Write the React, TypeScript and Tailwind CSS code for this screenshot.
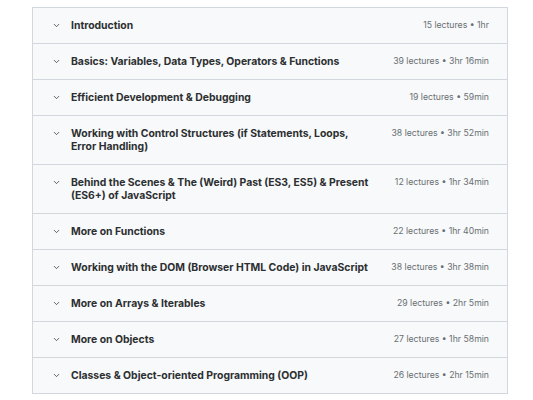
import { ChevronDown } from 'lucide-react';

const sections = [
  { title: 'Introduction', meta: '15 lectures • 1hr' },
  { title: 'Basics: Variables, Data Types, Operators & Functions', meta: '39 lectures • 3hr 16min' },
  { title: 'Efficient Development & Debugging', meta: '19 lectures • 59min' },
  { title: 'Working with Control Structures (if Statements, Loops, Error Handling)', meta: '38 lectures • 3hr 52min' },
  { title: 'Behind the Scenes & The (Weird) Past (ES3, ES5) & Present (ES6+) of JavaScript', meta: '12 lectures • 1hr 34min' },
  { title: 'More on Functions', meta: '22 lectures • 1hr 40min' },
  { title: 'Working with the DOM (Browser HTML Code) in JavaScript', meta: '38 lectures • 3hr 38min' },
  { title: 'More on Arrays & Iterables', meta: '29 lectures • 2hr 5min' },
  { title: 'More on Objects', meta: '27 lectures • 1hr 58min' },
  { title: 'Classes & Object-oriented Programming (OOP)', meta: '26 lectures • 2hr 15min' },
];

export default function App() {
  return (
    <div className="min-h-screen bg-white pt-[7px] font-['Inter',sans-serif]">
      <div className="mx-[32px] w-[476px] border border-[#d1d7dc] border-b-0">
        {sections.map((s) => (
          <div
            key={s.title}
            className="flex items-start bg-[#f7f9fa] border-b border-[#d1d7dc] pl-[19px] pr-[18px] py-[11px]"
          >
            <ChevronDown className="w-[9px] h-[9px] mt-[2px] text-[#2d2f31] shrink-0" strokeWidth={2} />
            <div className="flex-1 ml-[10px] text-[10.4px] leading-[13px] font-bold text-[#2d2f31]">
              {s.title}
            </div>
            <div className="shrink-0 ml-[18px] text-[8.7px] leading-[13px] text-[#6a6f73]">{s.meta}</div>
          </div>
        ))}
      </div>
    </div>
  );
}
